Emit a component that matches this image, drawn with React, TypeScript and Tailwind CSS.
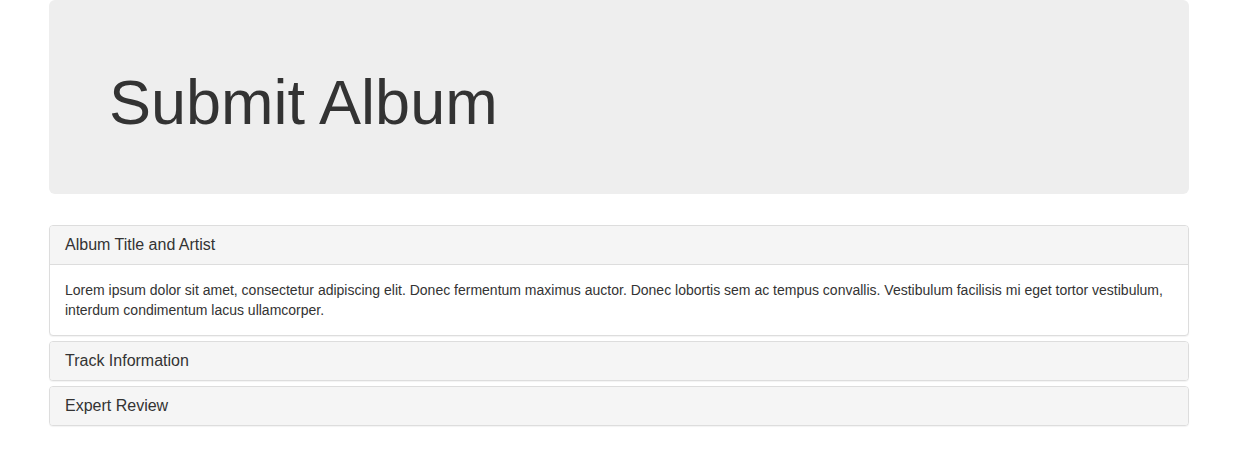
import React from "react";

const sections = [
  {
    title: "Album Title and Artist",
    body: "Lorem ipsum dolor sit amet, consectetur adipiscing elit. Donec fermentum maximus auctor. Donec lobortis sem ac tempus convallis. Vestibulum facilisis mi eget tortor vestibulum, interdum condimentum lacus ullamcorper.",
    open: true,
  },
  { title: "Track Information", body: "", open: false },
  { title: "Expert Review", body: "", open: false },
];

export default function App() {
  return (
    <div className="min-h-[472px] bg-white font-['Liberation_Sans',Arial,sans-serif] text-[#333]">
      <div className="ml-[49px] w-[1140px]">
        <div className="h-[194px] rounded-[6px] bg-[#eeeeee] px-[60px] pt-[68px]">
          <h1 className="text-[63px] leading-[69px] font-normal text-[#333]">Submit Album</h1>
        </div>

        <div className="mt-[31px] flex flex-col gap-[5px]">
          {sections.map((s) => (
            <div key={s.title} className="overflow-hidden rounded-[4px] border border-[#dddddd] bg-white shadow-[0_1px_1px_rgba(0,0,0,0.05)]">
              <div className="bg-[#f5f5f5] px-[15px] py-[10px] text-[16px] leading-[18px]">
                {s.title}
              </div>
              {s.open && (
                <div className="border-t border-[#dddddd] p-[15px] text-[14px] leading-[20px] text-[#333]">
                  {s.body}
                </div>
              )}
            </div>
          ))}
        </div>
      </div>
    </div>
  );
}
